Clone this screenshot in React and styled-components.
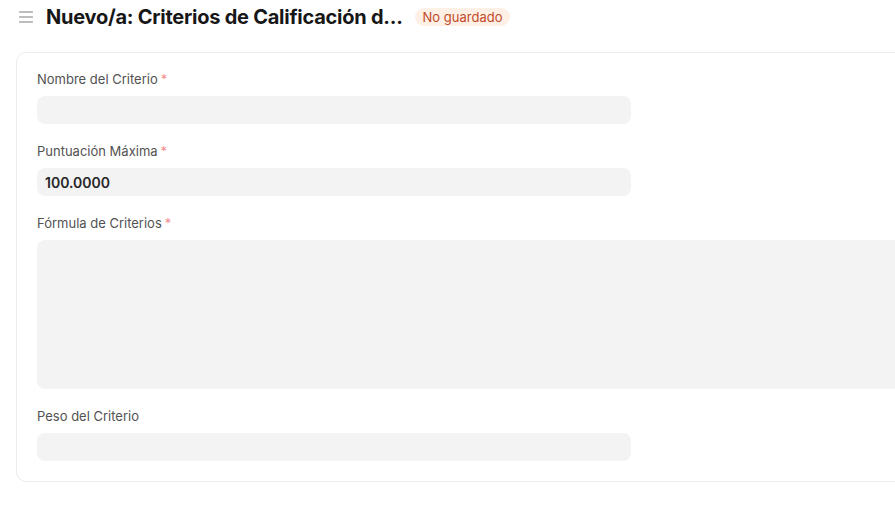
import React from "react";
import styled, { createGlobalStyle } from "styled-components";

const GlobalStyle = createGlobalStyle`
	html, body {
		margin: 0;
		padding: 0;
		background: #ffffff;
		overflow: hidden;
		font-family: Inter, "Noto Sans", sans-serif;
	}
`;

const Page = styled.div`
	padding: 0 0 0 16px;
	width: 1300px;
`;

const Header = styled.div`
	display: flex;
	align-items: center;
	height: 34px;
`;

const MenuButton = styled.button`
	display: flex;
	align-items: center;
	justify-content: center;
	width: 20px;
	height: 20px;
	padding: 0;
	margin: 0 10px 0 0;
	background: none;
	border: none;
	color: #7c7c7c;
	cursor: pointer;
`;

const Title = styled.h1`
	margin: 0;
	font-size: 20px;
	font-weight: 700;
	color: #171717;
	letter-spacing: -0.25px;
	white-space: nowrap;
`;

const Badge = styled.span`
	margin-left: 12px;
	padding: 0 8px;
	height: 18px;
	line-height: 18px;
	border-radius: 9px;
	background: #fff0e6;
	color: #c24a26;
	font-size: 13px;
	white-space: nowrap;
`;

const Card = styled.div`
	margin-top: 18px;
	border: 1px solid #ececec;
	border-radius: 10px;
	padding: 18px 20px 20px;
	display: flex;
	flex-direction: column;
	gap: 19px;
`;

const Field = styled.div`
	display: flex;
	flex-direction: column;
	gap: 9px;
`;

const Label = styled.label`
	font-size: 13px;
	line-height: 16px;
	color: #525252;
`;

const Required = styled.span`
	color: #ef8f8f;
	margin-left: 3px;
`;

const Input = styled.div`
	width: ${(props) => (props.$wide ? "100%" : "594px")};
	height: ${(props) => (props.$tall ? "149px" : "28px")};
	background: #f3f3f3;
	border-radius: 8px;
	box-sizing: border-box;
	padding: 0 8px;
	display: flex;
	align-items: center;
	font-size: 14px;
	font-weight: 600;
	color: #262626;
`;

function MenuIcon() {
	return (
		<svg width="16" height="16" viewBox="0 0 16 16" fill="none">
			<path
				d="M1.5 3h13M1.5 8h13M1.5 13h13"
				stroke="currentColor"
				strokeWidth="1.1"
				strokeLinecap="round"
			/>
		</svg>
	);
}

const fields = [
	{ label: "Nombre del Criterio", required: true },
	{ label: "Puntuación Máxima", required: true, value: "100.0000" },
	{ label: "Fórmula de Criterios", required: true, wide: true, tall: true },
	{ label: "Peso del Criterio" },
];

export default function App() {
	return (
		<>
			<GlobalStyle />
			<Page>
				<Header>
					<MenuButton aria-label="Menú">
						<MenuIcon />
					</MenuButton>
					<Title>Nuevo/a: Criterios de Calificación d...</Title>
					<Badge>No guardado</Badge>
				</Header>
				<Card>
					{fields.map((field) => (
						<Field key={field.label}>
							<Label>
								{field.label}
								{field.required && <Required>*</Required>}
							</Label>
							<Input $wide={field.wide} $tall={field.tall}>
								{field.value}
							</Input>
						</Field>
					))}
				</Card>
			</Page>
		</>
	);
}
